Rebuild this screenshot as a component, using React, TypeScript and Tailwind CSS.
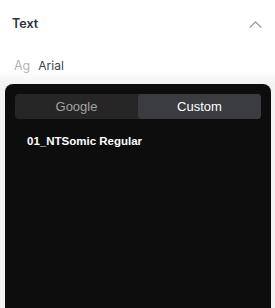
import React from 'react';

const ChevronUp: React.FC = () => (
  <svg width="13" height="7" viewBox="0 0 13 7" fill="none">
    <path d="M1 6.2L6.5 1L12 6.2" stroke="#9a9a9a" strokeWidth="1.2" strokeLinecap="round" strokeLinejoin="round" />
  </svg>
);

const App: React.FC = () => {
  const [tab, setTab] = React.useState<'google' | 'custom'>('custom');

  const tabs = [
    { id: 'google' as const, label: 'Google' },
    { id: 'custom' as const, label: 'Custom' },
  ];

  return (
    <div className="w-[275px] h-[308px] overflow-hidden bg-white flex flex-col font-['Inter',sans-serif]">
      {/* section header */}
      <div className="h-[49px] shrink-0 flex items-center justify-between pl-3 pr-[13px]">
        <span className="text-[12.5px] font-semibold text-[#2b303a]">Text</span>
        <ChevronUp />
      </div>

      <div className="flex-1 flex flex-col bg-[linear-gradient(to_bottom,#ffffff_0px,#ffffff_22px,#f3f3f3_35px)]">
        {/* current font */}
        <div className="h-[35px] shrink-0 flex items-center gap-[8px] pl-[14px] pb-[1px]">
          <span className="text-[12.5px] text-[#b3b3b3]">Ag</span>
          <span className="text-[12px] text-[#3a4150]">Arial</span>
        </div>

        {/* font picker */}
        <div className="flex-1 ml-[5px] mr-[4px] rounded-t-[8px] bg-[#0d0d0d] px-[10px] pt-[10px] font-['Liberation_Sans',Arial,sans-serif]">
          <div className="flex h-[25px] rounded-[4px] bg-[#262626]">
            {tabs.map(t => (
              <button
                key={t.id}
                onClick={() => setTab(t.id)}
                className={`flex-1 flex items-center justify-center rounded-[4px] text-[13px] ${
                  tab === t.id ? 'bg-[#3a3c3f] text-white' : 'text-[#a3a3a3]'
                }`}
              >
                {t.label}
              </button>
            ))}
          </div>

          <div className="mt-[15px] pl-3 text-[11.5px] leading-[14px] font-bold text-white">
            {tab === 'custom' ? '01_NTSomic Regular' : 'Roboto'}
          </div>
        </div>
      </div>
    </div>
  );
};

export default App;
